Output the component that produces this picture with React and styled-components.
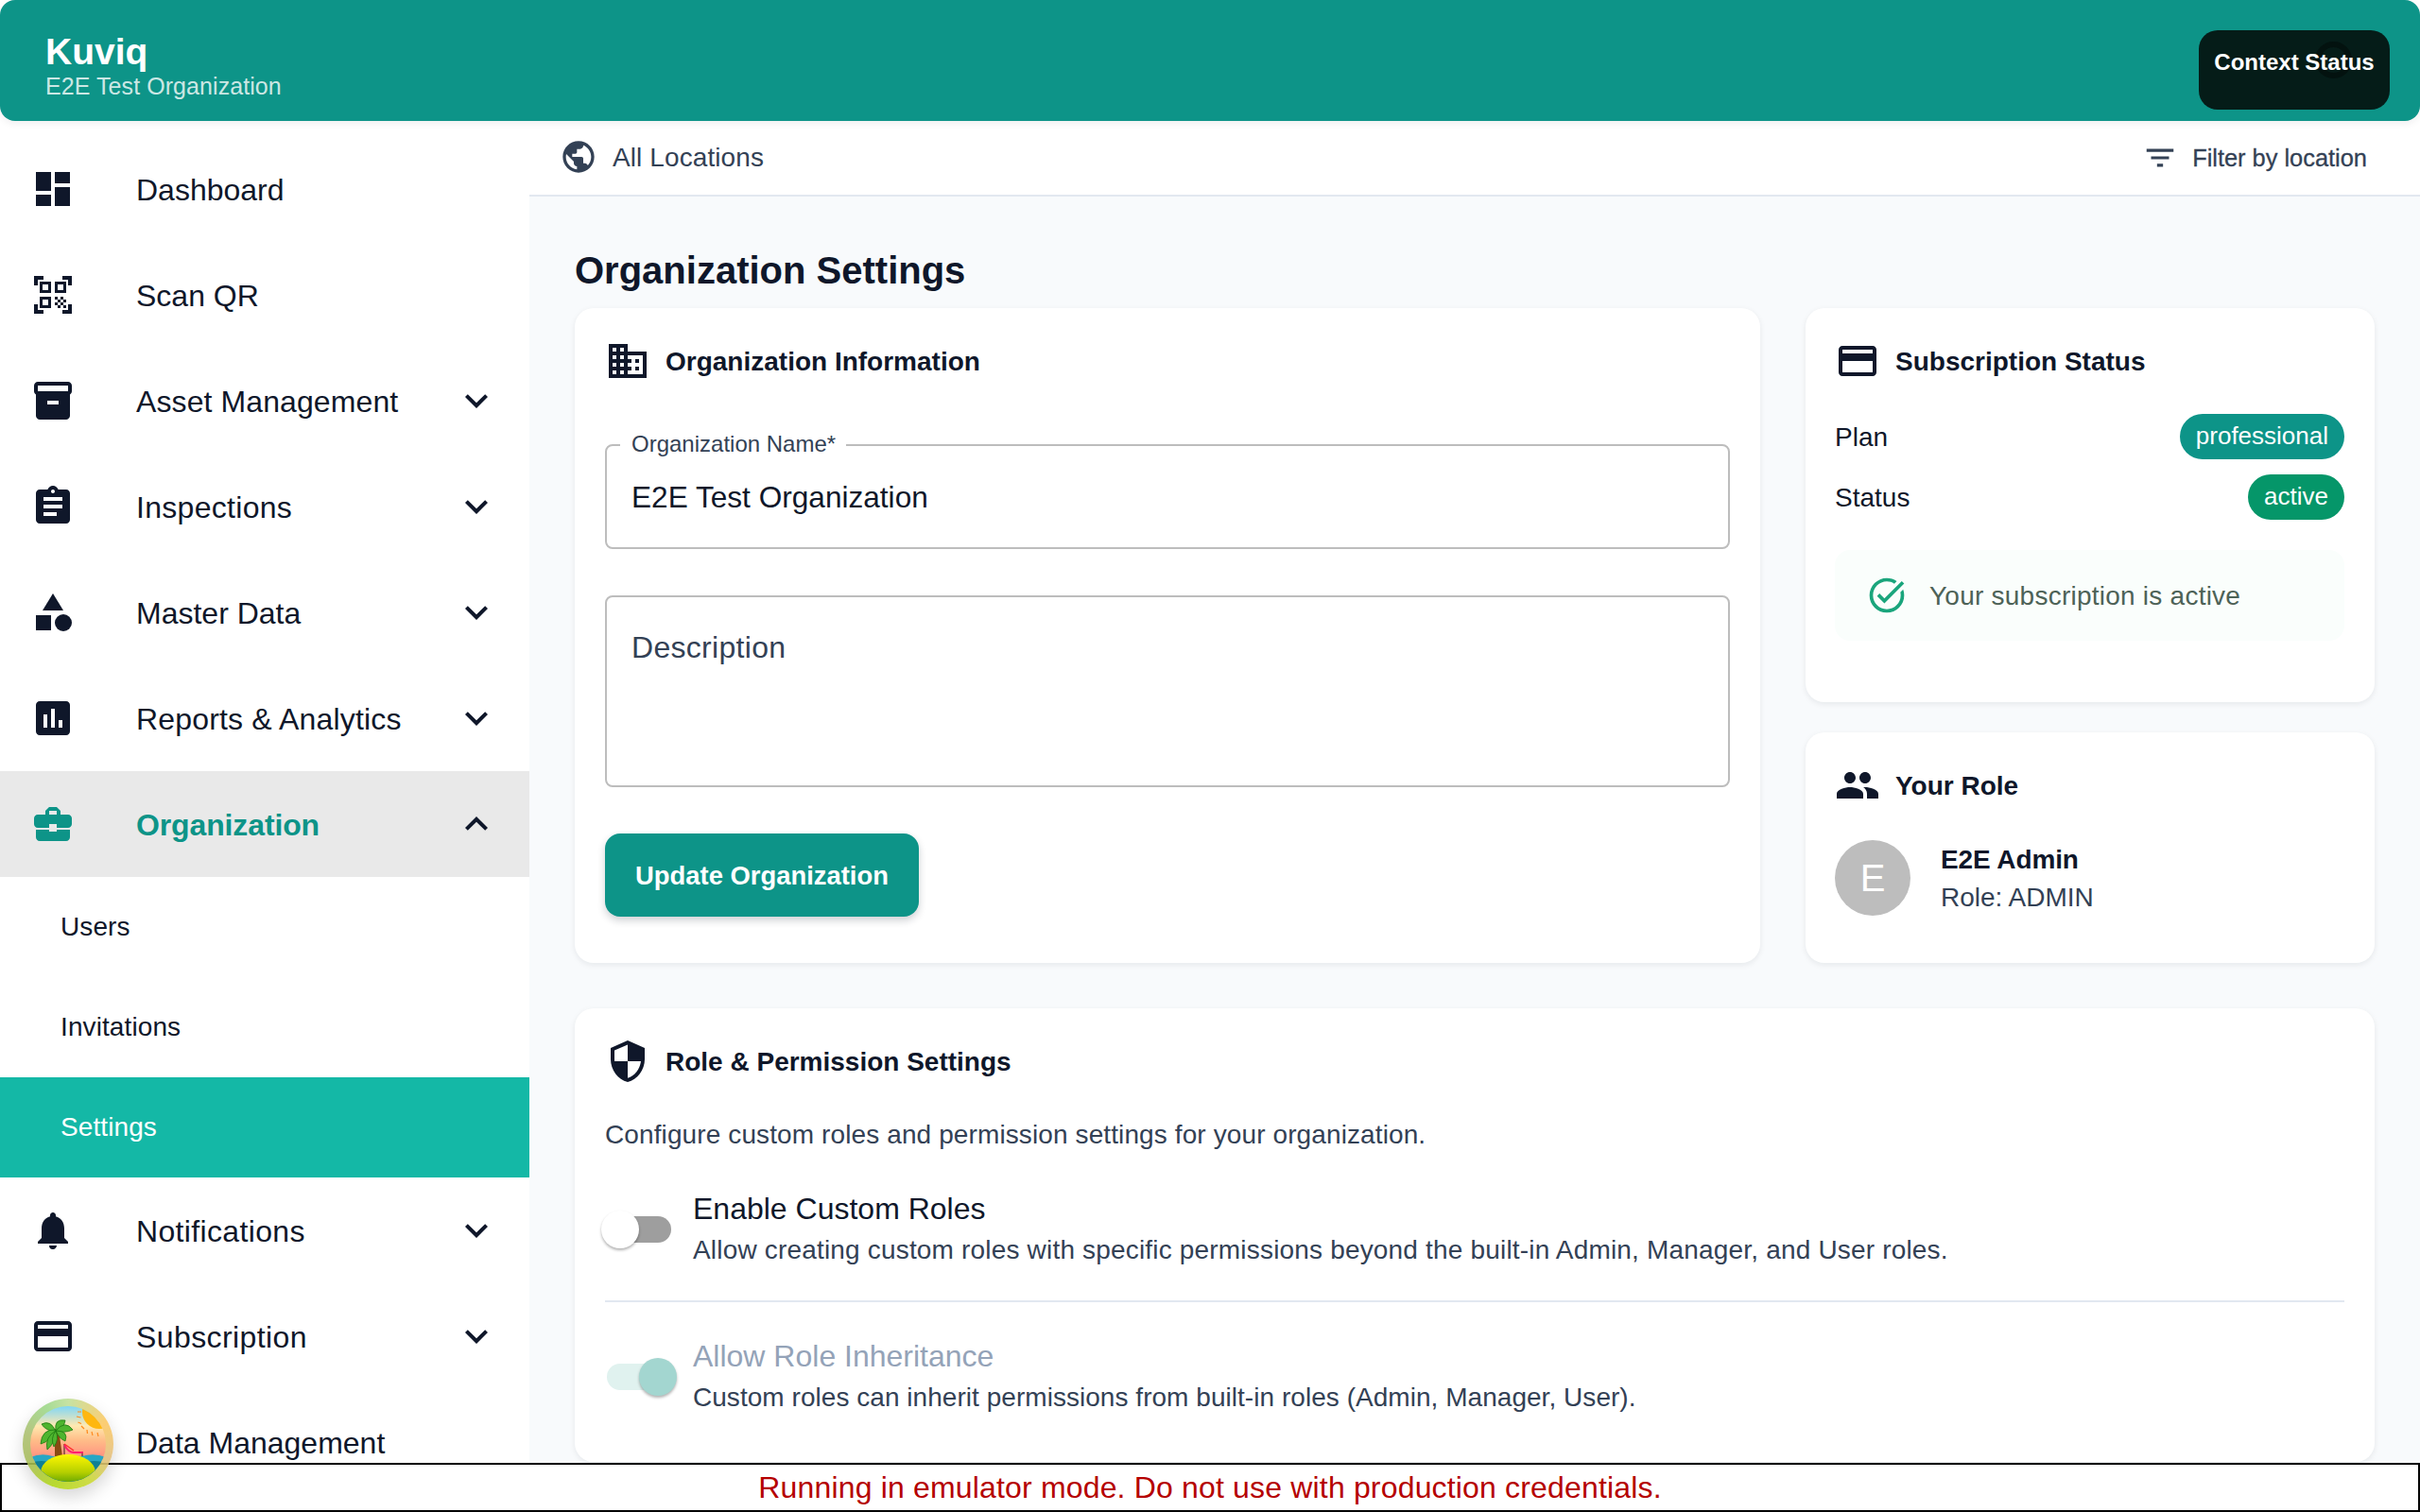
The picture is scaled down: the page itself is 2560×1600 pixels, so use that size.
import React from "react";
import styled, { createGlobalStyle } from "styled-components";
import {
  MdDashboard, MdQrCodeScanner, MdInventory2, MdAssignment, MdCategory, MdAssessment,
  MdBusinessCenter, MdNotifications, MdCreditCard, MdExpandMore, MdExpandLess, MdPublic,
  MdFilterList, MdDomain, MdPeople, MdTaskAlt, MdSecurity, MdStorage,
} from "react-icons/md";

const Global = createGlobalStyle`
  * { box-sizing: border-box; }
  html, body { margin: 0; padding: 0; height: 100%; overflow: hidden; background: #fff; }
  body {
    font-family: "Liberation Sans", Arial, sans-serif;
    color: #0f172a;
    font-variant-ligatures: none;
  }
  input, textarea, button { font-variant-ligatures: none; }
`;

const Page = styled.div`
  height: 100vh;
  display: flex;
  flex-direction: column;
  overflow: hidden;
`;

const AppBar = styled.header`
  flex: 0 0 128px;
  display: flex;
  align-items: flex-start;
  justify-content: space-between;
  padding: 32px 32px 0 48px;
  background: #0d9488;
  color: #fff;
  border-radius: 16px;
  box-shadow: 0 2px 8px rgba(15, 23, 42, 0.08);
  position: relative;
  z-index: 2;
`;

const Brand = styled.div`
  display: flex;
  flex-direction: column;
`;

const BrandName = styled.div`
  font-size: 39px;
  line-height: 42px;
  padding-top: 2px;
  font-weight: 700;
`;

const BrandOrg = styled.div`
  font-size: 25px;
  line-height: 30px;
  letter-spacing: 0.07px;
  color: rgba(255, 255, 255, 0.8);
`;

const ContextButton = styled.button`
  position: relative;
  display: flex;
  justify-content: center;
  align-items: flex-start;
  width: 202px;
  height: 84px;
  padding: 18px 0 0;
  border: 0;
  border-radius: 20px;
  background: #051c18;
  color: #fff;
  font: 700 24px/32px "Liberation Sans", Arial, sans-serif;
  overflow: hidden;
`;

const ContextRing = styled.span`
  position: absolute;
  left: 123px;
  top: 12px;
  width: 39px;
  height: 39px;
  border-radius: 50%;
  border: 6px solid #03120f;
`;

const ContextLabel = styled.span`
  position: relative;
`;

const Body = styled.div`
  flex: 1;
  min-height: 0;
  display: flex;
`;

const Sidebar = styled.nav`
  flex: 0 0 560px;
  padding-top: 16px;
  background: #fff;
  overflow: hidden;
`;

const NavRow = styled.div`
  height: 112px;
  display: flex;
  align-items: center;
  padding: 0 32px;
  background: ${(p) => (p.$open ? "#e9e9e9" : "transparent")};
  color: ${(p) => (p.$open ? "#0d9488" : "#0f172a")};
`;

const NavIcon = styled.span`
  flex: 0 0 112px;
  height: 48px;
  display: flex;
  font-size: 48px;
`;

const NavLabel = styled.span`
  flex: 1;
  padding-top: 2px;
  font-size: 32px;
  letter-spacing: ${(p) => p.$track || 0}px;
  font-weight: ${(p) => (p.$open ? 700 : 400)};
`;

const Chevron = styled.span`
  width: 48px;
  height: 48px;
  display: flex;
  font-size: 48px;
  color: #0f172a;
`;

const SubRow = styled.div`
  height: 106px;
  display: flex;
  align-items: center;
  padding-left: 64px;
  font-size: 28px;
  letter-spacing: 0.1px;
  background: ${(p) => (p.$active ? "#14b8a6" : "transparent")};
  color: ${(p) => (p.$active ? "#fff" : "#0f172a")};
`;

const Main = styled.main`
  flex: 1;
  min-width: 0;
  background: #f8fafc;
  overflow: hidden;
`;

const LocationBar = styled.div`
  height: 80px;
  display: flex;
  align-items: center;
  justify-content: space-between;
  padding: 0 56px 2px 32px;
  background: #fff;
  border-bottom: 2px solid #e2e8f0;
  color: #334155;
`;

const LocationLabel = styled.div`
  display: flex;
  align-items: center;
  gap: 16px;
  font-size: 28px;
  letter-spacing: 0.1px;
`;

const LocationText = styled.span`
  padding-top: 2px;
`;

const FilterButton = styled.div`
  display: flex;
  align-items: center;
  gap: 15px;
  font-size: 25.4px;
  -webkit-text-stroke: 0.3px currentColor;
  padding-top: 2px;
`;

const Content = styled.div`
  padding: 54px 48px 0;
`;

const PageTitle = styled.h1`
  margin: 0 0 16px;
  font-size: 40px;
  line-height: 48px;
  font-weight: 700;
`;

const Grid = styled.div`
  display: grid;
  grid-template-columns: minmax(0, 1254fr) minmax(0, 602fr);
  gap: 48px;
`;

const Card = styled.section`
  background: #fff;
  border-radius: 20px;
  box-shadow: 0 2px 6px rgba(15, 23, 42, 0.08);
  padding: 32px;
`;

const SideColumn = styled.div`
  display: flex;
  flex-direction: column;
  gap: 32px;
`;

const SubscriptionCard = styled(Card)`
  padding: 32px 32px 65px 31px;
`;

const RoleCard = styled(Card)`
  padding: 32px 32px 50px 31px;
`;

const PermissionCard = styled(Card)`
  grid-column: 1 / -1;
  padding-bottom: 46px;
`;

const CardHeading = styled.div`
  display: flex;
  align-items: center;
  gap: 16px;
  height: 48px;
  font-size: 28px;
  font-weight: 700;
`;

const HeadingText = styled.span`
  padding-top: 2px;
`;

const HeadingIcon = styled.span`
  width: 48px;
  height: 48px;
  display: flex;
  font-size: 48px;
`;

const OutlinedField = styled.div`
  position: relative;
  height: ${(p) => p.$h}px;
  margin-top: ${(p) => p.$mt}px;
  border: 2px solid #bdbdbd;
  border-radius: 8px;
`;

const FieldLabel = styled.label`
  position: absolute;
  left: 14px;
  top: -16px;
  padding: 0 11px 0 12px;
  background: #fff;
  font-size: 24px;
  line-height: 28px;
  color: #334155;
`;

const TextInput = styled.input`
  display: block;
  width: 100%;
  height: 100%;
  border: 0;
  outline: 0;
  background: transparent;
  padding: 2px 26px 0;
  font: 400 31.6px "Liberation Sans", Arial, sans-serif;
  color: #0f172a;
`;

const TextArea = styled.textarea`
  display: block;
  width: 100%;
  height: 100%;
  border: 0;
  outline: 0;
  resize: none;
  background: transparent;
  padding: 35px 26px;
  font: 400 32px/36px "Liberation Sans", Arial, sans-serif;
  letter-spacing: 0.3px;
  &::placeholder { color: #334155; opacity: 1; }
`;

const PrimaryButton = styled.button`
  display: block;
  width: 332px;
  height: 88px;
  margin-top: 49px;
  padding: 2px 0 0;
  border: 0;
  border-radius: 16px;
  background: #0d9488;
  color: #fff;
  font: 700 27.4px "Liberation Sans", Arial, sans-serif;
  box-shadow: 0 4px 8px rgba(15, 23, 42, 0.2);
`;

const InfoRows = styled.div`
  display: flex;
  flex-direction: column;
  gap: 16px;
  margin-top: 32px;
`;

const InfoRow = styled.div`
  display: flex;
  align-items: center;
  justify-content: space-between;
  font-size: 28px;
`;

const InfoLabel = styled.span`
  padding-top: 2px;
`;

const Chip = styled.span`
  height: 48px;
  display: flex;
  align-items: center;
  padding: 0 17px 1px;
  border-radius: 24px;
  font-size: 26px;
  color: #fff;
  background: ${(p) => p.$bg};
`;

const SuccessNote = styled.div`
  height: 96px;
  margin-top: 32px;
  display: flex;
  align-items: center;
  gap: 23px;
  padding-left: 33px;
  border-radius: 16px;
  background: #fafefc;
  color: #4d6257;
  font-size: 28px;
  letter-spacing: 0.24px;
`;

const NoteText = styled.span`
  padding-top: 2px;
`;

const SuccessIcon = styled.span`
  width: 44px;
  height: 44px;
  display: flex;
  font-size: 44px;
  color: #1aa57c;
`;

const Person = styled.div`
  display: flex;
  align-items: center;
  gap: 32px;
  margin-top: 34px;
`;

const Avatar = styled.div`
  width: 80px;
  height: 80px;
  border-radius: 50%;
  background: #bdbdbd;
  color: #fff;
  font-size: 40px;
  display: flex;
  align-items: center;
  justify-content: center;
`;

const PersonText = styled.div`
  display: flex;
  flex-direction: column;
  gap: 8px;
  padding-top: 2px;
  font-size: 28px;
  line-height: 32px;
`;

const PersonName = styled.div`
  font-weight: 700;
  letter-spacing: -0.1px;
`;

const PersonRole = styled.div`
  color: #334155;
`;

const Intro = styled.p`
  margin: 34px 0 0;
  font-size: 28px;
  line-height: 40px;
  letter-spacing: 0.11px;
  color: #334155;
`;

const SettingRow = styled.div`
  display: flex;
  align-items: center;
  gap: 17px;
  margin-top: ${(p) => p.$mt}px;
  padding-bottom: ${(p) => (p.$divider ? 31 : 0)}px;
  border-bottom: ${(p) => (p.$divider ? "2px solid #e2e8f0" : "0")};
`;

const Toggle = styled.span`
  position: relative;
  flex: 0 0 80px;
  height: 40px;
  margin-left: -4px;
  display: flex;
  align-items: center;
`;

const ToggleTrack = styled.span`
  width: 68px;
  height: 28px;
  margin-left: 6px;
  border-radius: 14px;
  background: ${(p) => (p.$on ? "#e0f2ef" : "#9e9e9e")};
`;

const ToggleThumb = styled.span`
  position: absolute;
  top: 0;
  left: ${(p) => (p.$on ? 40 : 0)}px;
  width: 40px;
  height: 40px;
  border-radius: 50%;
  background: ${(p) => (p.$on ? "#a3d6d0" : "#fff")};
  box-shadow: 0 2px 3px rgba(0, 0, 0, 0.3);
`;

const SettingText = styled.div`
  display: flex;
  flex-direction: column;
  padding-top: 1px;
`;

const SettingTitle = styled.div`
  font-size: 32px;
  line-height: 44px;
  color: ${(p) => (p.$muted ? "#94a3b8" : "#0f172a")};
`;

const SettingDesc = styled.div`
  font-size: 28px;
  line-height: 44px;
  letter-spacing: ${(p) => p.$track || 0}px;
  color: #334155;
`;

const EmulatorBanner = styled.div`
  position: fixed;
  left: 0;
  right: 0;
  bottom: 0;
  height: 52px;
  display: flex;
  align-items: center;
  justify-content: center;
  background: #fff;
  border: 2px solid #000;
  color: #b50000;
  font-size: 32px;
  letter-spacing: 0.17px;
  z-index: 3;
`;

const LogoBadge = styled.div`
  position: fixed;
  left: 24px;
  top: 1480px;
  width: 96px;
  height: 96px;
  padding: 8px;
  border-radius: 50%;
  background: conic-gradient(
    rgba(190, 222, 150, 0.88),
    rgba(252, 200, 100, 0.9) 60deg,
    rgba(225, 190, 125, 0.88) 110deg,
    rgba(200, 216, 50, 0.9) 150deg,
    rgba(178, 214, 30, 0.92) 200deg,
    rgba(165, 185, 90, 0.88) 250deg,
    rgba(170, 190, 110, 0.88) 285deg,
    rgba(155, 215, 135, 0.88) 330deg,
    rgba(190, 222, 150, 0.88)
  );
  box-shadow: 0 8px 18px rgba(0, 0, 0, 0.16);
  z-index: 4;
`;

const LogoArt = styled.svg`
  display: block;
  width: 80px;
  height: 80px;
`;

function IslandLogo() {
  const rays = [
    [50, 6, 54, 6], [49, 11, 53.5, 12], [50.5, 17, 54, 18.5], [54, 21, 57, 24],
    [60, 25, 60.5, 29], [65, 27, 66, 31], [71, 28, 72, 32],
  ];
  return (
    <LogoArt viewBox="0 0 80 80">
      <defs>
        <linearGradient id="sky" x1="0" y1="0" x2="0" y2="1">
          <stop offset="0" stopColor="#7fd6f6" />
          <stop offset="0.26" stopColor="#ffe9b0" />
          <stop offset="0.45" stopColor="#ffbd88" />
          <stop offset="0.7" stopColor="#ff8d80" />
        </linearGradient>
        <linearGradient id="hill" x1="0" y1="0" x2="0" y2="1">
          <stop offset="0" stopColor="#fff700" />
          <stop offset="0.5" stopColor="#b5cf00" />
          <stop offset="1" stopColor="#2f8c00" />
        </linearGradient>
        <clipPath id="disc">
          <circle cx="40" cy="40" r="40" />
        </clipPath>
      </defs>
      <g clipPath="url(#disc)">
        <rect width="80" height="80" fill="url(#sky)" />
        <circle cx="73" cy="6" r="18" fill="#ffb70f" />
        {rays.map(([a, b, c, d]) => (
          <line key={`${a}-${b}`} x1={a} y1={b} x2={c} y2={d} stroke="#ff8a1e" strokeWidth="1.2" />
        ))}
        <path d="M0 54 Q12 49 24 53 Q40 56 54 53 Q68 49 80 54 V80 H0Z" fill="#27a6c4" />
        <path d="M0 60 Q12 56 24 60 Q40 62 54 60 Q68 56 80 60 V80 H0Z" fill="#0f7f93" />
        <polygon points="26,24 30,24 34,53 26,53" fill="#8a4a12" />
        <path d="M36 40 V53 M55 48 V53" stroke="#3a1a1a" strokeWidth="1" fill="none" />
        <path d="M36 41 Q41 50 47 49 L56 49" stroke="#ff1f6e" strokeWidth="2" fill="none" />
        <path d="M36 40 L46 47" stroke="#ff2a2a" strokeWidth="1.4" fill="none" />
        <g fill="#4fb52f" stroke="#1d7a12" strokeWidth="0.8">
          <path d="M27 27 Q22 14 12 19 Q16 26 27 27Z" />
          <path d="M27 26 Q25 13 37 15 Q36 23 27 26Z" />
          <path d="M27 26 Q37 14 45 25 Q36 29 27 26Z" />
          <path d="M27 26 Q41 26 37 37 Q30 34 27 26Z" />
          <path d="M27 25 Q12 24 11 40 Q22 37 27 25Z" />
          <path d="M27 26 Q15 33 18 46 Q27 38 27 26Z" />
          <path d="M27 26 Q21 34 25 43 Q31 35 27 26Z" />
        </g>
        <ellipse cx="40" cy="70" rx="29" ry="19" fill="url(#hill)" />
      </g>
    </LogoArt>
  );
}

const navTop = [
  { icon: MdDashboard, label: "Dashboard" },
  { icon: MdQrCodeScanner, label: "Scan QR" },
  { icon: MdInventory2, label: "Asset Management", more: true, track: 0.1 },
  { icon: MdAssignment, label: "Inspections", more: true, track: 0.3 },
  { icon: MdCategory, label: "Master Data", more: true },
  { icon: MdAssessment, label: "Reports & Analytics", more: true, track: 0.17 },
];

const navBottom = [
  { icon: MdNotifications, label: "Notifications", more: true, track: 0.35 },
  { icon: MdCreditCard, label: "Subscription", more: true, track: 0.4 },
  { icon: MdStorage, label: "Data Management" },
];

function NavItem({ icon: Icon, label, more, open, track }) {
  return (
    <NavRow $open={open}>
      <NavIcon><Icon /></NavIcon>
      <NavLabel $open={open} $track={track}>{label}</NavLabel>
      {(more || open) && <Chevron>{open ? <MdExpandLess /> : <MdExpandMore />}</Chevron>}
    </NavRow>
  );
}

export default function App() {
  return (
    <Page>
      <Global />
      <AppBar>
        <Brand>
          <BrandName>Kuviq</BrandName>
          <BrandOrg>E2E Test Organization</BrandOrg>
        </Brand>
        <ContextButton>
          <ContextRing />
          <ContextLabel>Context Status</ContextLabel>
        </ContextButton>
      </AppBar>
      <Body>
        <Sidebar>
          {navTop.map((n) => <NavItem key={n.label} {...n} />)}
          <NavItem icon={MdBusinessCenter} label="Organization" open track={-0.13} />
          <SubRow>Users</SubRow>
          <SubRow>Invitations</SubRow>
          <SubRow $active>Settings</SubRow>
          {navBottom.map((n) => <NavItem key={n.label} {...n} />)}
        </Sidebar>
        <Main>
          <LocationBar>
            <LocationLabel><MdPublic size={40} /><LocationText>All Locations</LocationText></LocationLabel>
            <FilterButton><MdFilterList size={38} />Filter by location</FilterButton>
          </LocationBar>
          <Content>
            <PageTitle>Organization Settings</PageTitle>
            <Grid>
              <Card>
                <CardHeading><HeadingIcon><MdDomain /></HeadingIcon><HeadingText>Organization Information</HeadingText></CardHeading>
                <OutlinedField $h={111} $mt={64}>
                  <FieldLabel>Organization Name*</FieldLabel>
                  <TextInput readOnly value="E2E Test Organization" />
                </OutlinedField>
                <OutlinedField $h={203} $mt={49}>
                  <TextArea readOnly placeholder="Description" />
                </OutlinedField>
                <PrimaryButton>Update Organization</PrimaryButton>
              </Card>
              <SideColumn>
                <SubscriptionCard>
                  <CardHeading><HeadingIcon><MdCreditCard /></HeadingIcon><HeadingText>Subscription Status</HeadingText></CardHeading>
                  <InfoRows>
                    <InfoRow><InfoLabel>Plan</InfoLabel><Chip $bg="#0d9488">professional</Chip></InfoRow>
                    <InfoRow><InfoLabel>Status</InfoLabel><Chip $bg="#059669">active</Chip></InfoRow>
                  </InfoRows>
                  <SuccessNote><SuccessIcon><MdTaskAlt /></SuccessIcon><NoteText>Your subscription is active</NoteText></SuccessNote>
                </SubscriptionCard>
                <RoleCard>
                  <CardHeading><HeadingIcon><MdPeople /></HeadingIcon><HeadingText>Your Role</HeadingText></CardHeading>
                  <Person>
                    <Avatar>E</Avatar>
                    <PersonText>
                      <PersonName>E2E Admin</PersonName>
                      <PersonRole>Role: ADMIN</PersonRole>
                    </PersonText>
                  </Person>
                </RoleCard>
              </SideColumn>
              <PermissionCard>
                <CardHeading><HeadingIcon><MdSecurity /></HeadingIcon><HeadingText>Role &amp; Permission Settings</HeadingText></CardHeading>
                <Intro>Configure custom roles and permission settings for your organization.</Intro>
                <SettingRow $mt={35} $divider>
                  <Toggle><ToggleTrack /><ToggleThumb /></Toggle>
                  <SettingText>
                    <SettingTitle>Enable Custom Roles</SettingTitle>
                    <SettingDesc $track={0.18}>Allow creating custom roles with specific permissions beyond the built-in Admin, Manager, and User roles.</SettingDesc>
                  </SettingText>
                </SettingRow>
                <SettingRow $mt={34}>
                  <Toggle><ToggleTrack $on /><ToggleThumb $on /></Toggle>
                  <SettingText>
                    <SettingTitle $muted>Allow Role Inheritance</SettingTitle>
                    <SettingDesc $track={0.04}>Custom roles can inherit permissions from built-in roles (Admin, Manager, User).</SettingDesc>
                  </SettingText>
                </SettingRow>
              </PermissionCard>
            </Grid>
          </Content>
        </Main>
      </Body>
      <LogoBadge><IslandLogo /></LogoBadge>
      <EmulatorBanner>Running in emulator mode. Do not use with production credentials.</EmulatorBanner>
    </Page>
  );
}
